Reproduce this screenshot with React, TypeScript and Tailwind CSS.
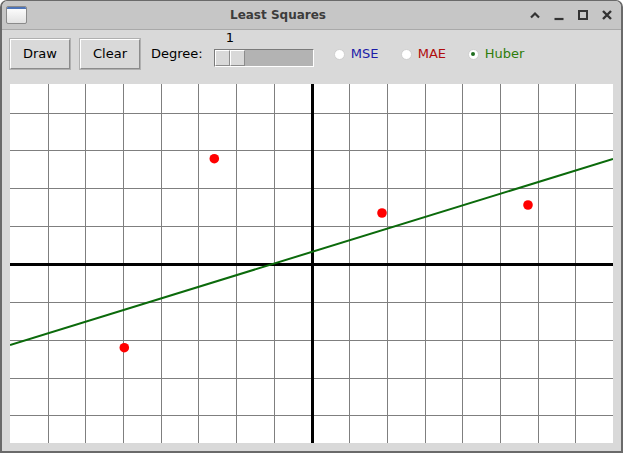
import React from 'react';

const FONT = { fontFamily: '"DejaVu Sans", "Liberation Sans", sans-serif' };

const W = 603;
const H = 359;
const CX = 301.5;
const CY = 180;
const SX = W / 16;
const SY = 37.85;

const points: [number, number][] = [
  [204.3, 74.7],
  [114.3, 263.7],
  [372, 129],
  [518, 121],
];

function TitleBar() {
  return (
    <div className="flex h-[29px] items-center rounded-t-[6px] border-b border-[#a9a9a9] bg-[#c6c6c6] pl-[4px] pr-[8px]">
      <div className="h-[18px] w-[21px] overflow-hidden rounded-[2px] border border-[#8a8a8a] bg-gradient-to-b from-white to-[#e2e2e2]">
        <div className="h-[2px] bg-[#4d74b8]" />
      </div>
      <div className="flex-1 text-center text-[12px] font-bold text-[#3c3c3c]">Least Squares</div>
      <div className="flex items-center gap-[12px] text-[#333]">
        <svg width="12" height="12" viewBox="0 0 12 12">
          <path d="M2 8.5 L6 4.5 L10 8.5" stroke="#333" strokeWidth="2.2" fill="none" />
        </svg>
        <svg width="12" height="12" viewBox="0 0 12 12">
          <path d="M1.5 10 H10.5" stroke="#333" strokeWidth="2.2" fill="none" />
        </svg>
        <svg width="12" height="12" viewBox="0 0 12 12">
          <rect x="2" y="2" width="8" height="8" stroke="#333" strokeWidth="2" fill="none" />
        </svg>
        <svg width="12" height="12" viewBox="0 0 12 12">
          <path d="M2 2 L10 10 M10 2 L2 10" stroke="#333" strokeWidth="2.4" fill="none" />
        </svg>
      </div>
    </div>
  );
}

function TkButton({ label }: { label: string }) {
  return (
    <button
      type="button"
      className="h-[30px] w-[60px] border border-t-white border-l-white border-r-[#8c8c8c] border-b-[#8c8c8c] bg-[#d9d9d9] text-[13px] text-black outline outline-1 outline-[#b0b0b0]"
    >
      {label}
    </button>
  );
}

function Radio({ label, color, checked }: { label: string; color: string; checked?: boolean }) {
  return (
    <div className="flex w-[67px] items-center gap-[6px]">
      <span className="flex h-[11px] w-[11px] items-center justify-center rounded-full border border-[#cfcfcf] bg-white">
        {checked && <span className="h-[4px] w-[4px] rounded-full bg-[#1f6e1f]" />}
      </span>
      <span className={`text-[13px] ${color}`}>{label}</span>
    </div>
  );
}

function Toolbar() {
  return (
    <div className="flex h-[30px] items-center">
      <TkButton label="Draw" />
      <div className="w-[10px]" />
      <TkButton label="Clear" />
      <span className="ml-[11px] text-[13px] text-black">Degree:</span>
      <div className="relative ml-[11px] mt-[8px] flex h-[18px] w-[100px] border border-t-[#7a7a7a] border-l-[#7a7a7a] border-r-white border-b-white bg-[#b3b3b3]">
        <span className="absolute -top-[22px] left-[11px] text-[13px] text-black">1</span>
        <div className="h-full w-[15px] border border-t-white border-l-white border-r-[#8c8c8c] border-b-[#8c8c8c] bg-[#d9d9d9]" />
        <div className="h-full w-[15px] border border-t-white border-l-white border-r-[#8c8c8c] border-b-[#8c8c8c] bg-[#d9d9d9]" />
      </div>
      <div className="ml-[20px] flex items-center">
        <Radio label="MSE" color="text-[#1c1ca8]" />
        <Radio label="MAE" color="text-[#b00c0c]" />
        <Radio label="Huber" color="text-[#2e7d0a]" checked />
      </div>
    </div>
  );
}

function Plot() {
  const vx = Array.from({ length: 15 }, (_, i) => Math.round(CX + (i - 7) * SX) + 0.5);
  const hy: number[] = [];
  for (let k = -5; k <= 5; k++) {
    const y = CY + k * SY;
    if (y > 0 && y < H) hy.push(Math.round(y) + 0.5);
  }
  return (
    <svg width={W} height={H} className="block bg-white" shapeRendering="crispEdges">
      {vx.map((x) => (
        <line key={`v${x}`} x1={x} y1={0} x2={x} y2={H} stroke="#7f7f7f" strokeWidth={1} />
      ))}
      {hy.map((y) => (
        <line key={`h${y}`} x1={0} y1={y} x2={W} y2={y} stroke="#7f7f7f" strokeWidth={1} />
      ))}
      <line x1={0} y1={CY} x2={W} y2={CY} stroke="#000" strokeWidth={3} />
      <line x1={302} y1={0} x2={302} y2={H} stroke="#000" strokeWidth={3} />
      <line x1={0} y1={261} x2={W} y2={75} stroke="#0b6a0b" strokeWidth={2} shapeRendering="auto" />
      {points.map(([x, y]) => (
        <circle key={`${x}-${y}`} cx={x} cy={y} r={4.8} fill="#ff0000" shapeRendering="auto" />
      ))}
    </svg>
  );
}

export default function App() {
  return (
    <div style={FONT} className="h-[453px] w-[623px] overflow-hidden bg-white">
      <div className="flex h-full flex-col rounded-t-[7px] border-2 border-t-1 border-[#6a6a6a] bg-[#d9d9d9]">
        <TitleBar />
        <div className="flex flex-1 flex-col px-[8px] pt-[9px]">
          <Toolbar />
          <div className="mt-[15px]">
            <Plot />
          </div>
        </div>
      </div>
    </div>
  );
}
